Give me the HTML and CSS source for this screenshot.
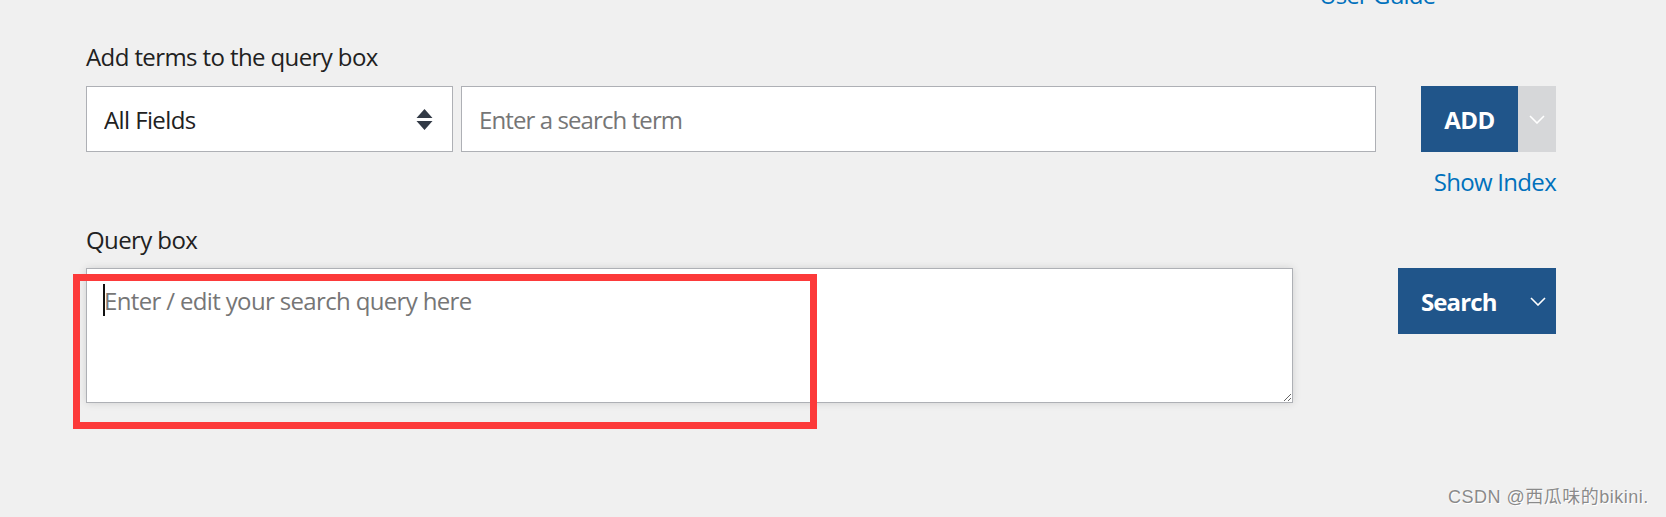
FILE: index.html
```html
<!DOCTYPE html>
<html lang="en">
<head>
<meta charset="utf-8">
<title>Advanced Search Builder</title>
<link rel="stylesheet" href="styles.css">
</head>
<body>
<div class="page">
  <div class="guide-row"><a class="link guide" href="#">User Guide</a></div>

  <div class="label add-label">Add terms to the query box</div>
  <div class="add-row">
    <div class="term-fields">
      <div class="select-wrap">
        <select class="field-select"><option>All Fields</option></select>
        <svg class="select-arrows" width="17" height="22" viewBox="0 0 17 22"><path d="M8.5 0 L16.5 9 L0.5 9 Z M0.5 12 L16.5 12 L8.5 21 Z" fill="#323a46"/></svg>
      </div>
      <input class="term-input" type="text" placeholder="Enter a search term">
    </div>
    <div class="btn-group">
      <button class="btn btn-add">ADD</button>
      <span class="btn-drop btn-drop-gray"><svg width="16" height="9" viewBox="0 0 16 9"><path d="M1 1 L8 8 L15 1" fill="none" stroke="#fff" stroke-width="1.6"/></svg></span>
    </div>
  </div>
  <div class="index-row"><a class="link" href="#">Show Index</a></div>

  <div class="label query-label">Query box</div>
  <div class="query-row">
    <div class="query-wrap">
      <textarea class="query-box" placeholder="Enter / edit your search query here"></textarea>
      <span class="caret"></span>
    </div>
    <button class="btn btn-search"><span>Search</span><svg width="16" height="9" viewBox="0 0 16 9"><path d="M1 1 L8 8 L15 1" fill="none" stroke="#fff" stroke-width="1.6"/></svg></button>
  </div>
</div>
<div class="annot"></div>
<div class="watermark">CSDN @西瓜味的bikini.</div>
</body>
</html>
```
FILE: styles.css
```css
html, body {
  margin: 0;
  padding: 0;
  background: #f0f0f0;
}
body {
  font-family: "Open Sans", "Noto Sans", sans-serif;
  color: #212121;
  font-size: 24px;
  letter-spacing: -0.6px;
  width: 1666px;
  height: 517px;
  overflow: hidden;
  position: relative;
}
.page {
  width: 1470px;
  padding-left: 86px;
}
.link {
  color: #0071bc;
  text-decoration: none;
}
.guide-row {
  display: flex;
  justify-content: flex-end;
  padding-right: 121px;
  height: 0;
}
.guide {
  display: block;
  line-height: 32px;
  margin-top: -21px;
  letter-spacing: -0.9px;
}
.label {
  line-height: 32px;
}
.add-label {
  padding-top: 41px;
}
.add-row {
  display: flex;
  justify-content: space-between;
  align-items: flex-start;
  margin-top: 13px;
}
.term-fields {
  display: flex;
  gap: 8px;
}
.select-wrap {
  position: relative;
}
.field-select {
  appearance: none;
  -webkit-appearance: none;
  width: 367px;
  height: 66px;
  border: 1px solid #aeb0b5;
  border-radius: 0;
  background: #fff;
  font: inherit;
  letter-spacing: inherit;
  color: #212121;
  padding: 0 0 0 17px;
  margin: 0;
}
.select-arrows {
  position: absolute;
  left: 330px;
  top: 23px;
}
.term-input {
  width: 915px;
  height: 66px;
  box-sizing: border-box;
  border: 1px solid #aeb0b5;
  border-radius: 0;
  background: #fff;
  font: inherit;
  letter-spacing: -0.9px;
  padding: 0 0 0 17px;
  margin: 0;
  outline: none;
}
.term-input::placeholder,
.query-box::placeholder {
  color: #767676;
}
.btn-group {
  display: flex;
  height: 66px;
}
.btn {
  border: 0;
  margin: 0;
  background: #20558a;
  color: #fff;
  font: inherit;
  font-weight: 700;
  letter-spacing: -0.6px;
  border-radius: 0;
}
.btn-add {
  width: 97px;
  height: 66px;
  padding: 0;
}
.btn-drop {
  display: flex;
  align-items: center;
  justify-content: center;
  width: 38px;
  height: 66px;
}
.btn-drop-gray {
  background: #d6d7d9;
}
.index-row {
  display: flex;
  justify-content: flex-end;
  line-height: 32px;
  margin-top: 14px;
  letter-spacing: -0.7px;
}
.query-label {
  margin-top: 26px;
}
.query-row {
  display: flex;
  justify-content: space-between;
  align-items: flex-start;
  margin-top: 12px;
}
.query-wrap {
  position: relative;
  width: 1207px;
  height: 135px;
}
.query-box {
  display: block;
  width: 1207px;
  height: 135px;
  box-sizing: border-box;
  border: 1px solid #aeb0b5;
  border-radius: 0;
  background: #fff;
  box-shadow: 0 0 8px rgba(0, 0, 0, 0.13);
  font: inherit;
  letter-spacing: -0.65px;
  line-height: 32px;
  padding: 16px 17px 14px;
  margin: 0;
  outline: none;
}
.caret {
  position: absolute;
  left: 17px;
  top: 16px;
  width: 2px;
  height: 32px;
  background: #111;
}
.btn-search {
  display: flex;
  align-items: center;
  justify-content: space-between;
  width: 158px;
  height: 66px;
  padding: 0 10px 0 23px;
  letter-spacing: -0.9px;
}
.annot {
  position: absolute;
  left: 73px;
  top: 274px;
  width: 730px;
  height: 141px;
  border: 7px solid #fc3a3a;
}
.watermark {
  position: absolute;
  left: 1448px;
  top: 486px;
  font-family: "Liberation Sans", "Noto Sans CJK SC", sans-serif;
  font-size: 18px;
  letter-spacing: 0.5px;
  line-height: 22px;
  color: #8a8a8a;
  text-shadow: 0 0 1px #fff, 1px 1px 0 #fff;
}
```
